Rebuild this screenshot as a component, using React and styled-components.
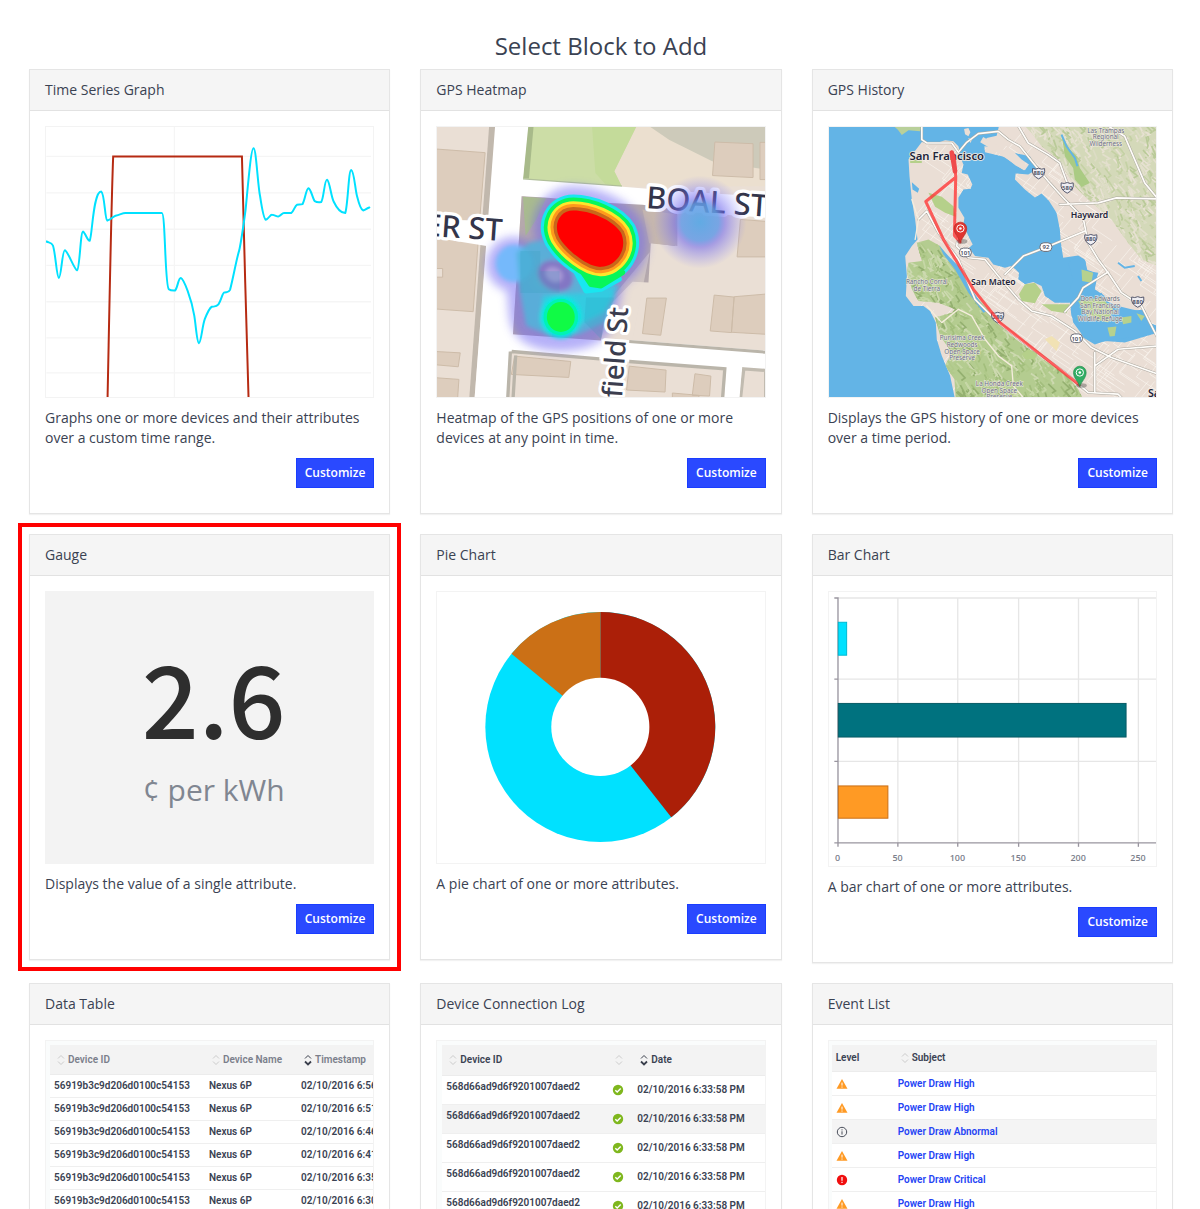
import React from "react";
import styled, { createGlobalStyle, css } from "styled-components";

const FONT = '"Open Sans", "Noto Sans", sans-serif';
const MAP_FONT = '"Noto Sans", "Open Sans", sans-serif';
const TABLE_FONT = 'Roboto, "Open Sans", sans-serif';
const INK = "#3a4252";

const GlobalStyle = createGlobalStyle`
  *, *::before, *::after { box-sizing: border-box; }
  body { margin: 0; background: #fff; color: ${INK}; font: 14px/20px ${FONT}; }
`;

const Page = styled.main`
  height: 100vh;
  overflow-y: auto;
  scrollbar-width: none;
  padding: 31px 27px 0 29px;
`;

const PageTitle = styled.h1`
  margin: 0 0 9px;
  font-size: 24px;
  line-height: 29px;
  font-weight: 400;
  text-align: center;
`;

const Grid = styled.div`
  display: grid;
  grid-template-columns: repeat(3, minmax(0, 1fr));
  gap: 20px 30px;
  align-items: start;
`;

const Card = styled.section`
  background: #fff;
  border: 1px solid #e5e5e5;
  box-shadow: 0 1px 1px rgba(0, 0, 0, 0.05);
  ${(p) => p.$highlighted && css`
    outline: 4px solid #ff0000;
    outline-offset: 7px;
  `}
`;

const CardTitle = styled.h2`
  margin: 0;
  padding: 10px 15px;
  background: #f5f5f5;
  border-bottom: 1px solid #e2e2e2;
  font-size: 14px;
  line-height: 20px;
  font-weight: 400;
`;

const CardBody = styled.div`
  display: flex;
  flex-direction: column;
  gap: 10px;
  padding: 15px 15px 25px;
`;

const Preview = styled.div`
  aspect-ratio: ${(p) => (p.$tall ? "330 / 276" : "330 / 273")};
  border: 1px solid #f3f3f3;
  background: #fff;
  overflow: hidden;
`;

const Drawing = styled.svg`
  display: block;
  width: 100%;
  height: 100%;
`;

const Description = styled.p`
  margin: 0;
`;

const CustomizeButton = styled.button`
  align-self: flex-end;
  height: 30px;
  padding: 0 8px;
  border: 1px solid #1a3dff;
  background: #2a49ff;
  color: #fff;
  font: 600 12px/18px ${FONT};
  cursor: pointer;
`;

const GaugeFace = styled(Preview)`
  display: flex;
  flex-direction: column;
  align-items: center;
  justify-content: center;
  gap: 4px;
  padding-left: 8px;
  background: #f3f3f3;
`;

const GaugeValue = styled.div`
  font: 500 100px/120px "Noto Sans CJK SC", "Roboto", sans-serif;
  color: #2e2e2e;
`;

const GaugeUnit = styled.div`
  font-size: 30px;
  line-height: 60px;
  color: #808691;
`;

const TablePreview = styled(Preview)`
  padding: 4px 0 0 ${(p) => p.$inset}px;
  background: #fafcfc;
`;

const Table = styled.table`
  width: ${(p) => p.$width};
  table-layout: fixed;
  border-collapse: collapse;
  background: #fff;
  font-family: ${TABLE_FONT};
  font-size: 10px;
  line-height: 12px;
  font-weight: 600;
  white-space: nowrap;
`;

const HeadCell = styled.th`
  width: ${(p) => (p.$width ? `${p.$width}px` : "auto")};
  height: ${(p) => p.$height}px;
  padding: 0 0 0 ${(p) => (p.$sortable ? 7 : 4)}px;
  background: #f3f3f3;
  border-bottom: 1px solid #ececec;
  color: ${(p) => (p.$muted ? "#7b7f8b" : INK)};
  font-weight: 600;
  text-align: left;
`;

const HeadLabel = styled.span`
  display: flex;
  align-items: center;
  gap: 3px;
`;

const Row = styled.tr`
  height: ${(p) => p.$height}px;
  background: ${(p) => (p.$shaded ? "#f4f4f4" : "#fff")};
`;

const Cell = styled.td`
  padding: ${(p) => (p.$raised ? "0 0 6px 4px" : "0 0 0 4px")};
  border-bottom: 1px solid #efefef;
  & > svg { display: block; }
`;

const EventLink = styled.a`
  color: #2443f5;
  text-decoration: none;
`;

function SortIcon({ active }) {
  return (
    <svg width="8" height="12" viewBox="0 0 8 12" fill="none" stroke={active ? "#3a3f4c" : "#cccccc"} aria-hidden="true">
      <path d="M1 4.5 4 1.5 7 4.5" />
      <path d="M1 7.5 4 10.5 7 7.5" strokeWidth={active ? 1.8 : 1} />
    </svg>
  );
}

function CheckIcon() {
  return (
    <svg width="12" height="12" viewBox="0 0 12 12" aria-hidden="true">
      <circle cx="6" cy="6" r="5.2" fill="#7fb71e" />
      <path d="M3.3 6.2 5.2 8 8.7 4.4" fill="none" stroke="#fff" strokeWidth="1.4" />
    </svg>
  );
}

function LevelIcon({ level }) {
  return (
    <svg width="12" height="12" viewBox="0 0 12 12" role="img" aria-label={level}>
      {level === "high" && (
        <>
          <path d="M6 1 11.5 10.8H.5Z" fill="#ff9a24" />
          <path d="M6 4.6V7.6M6 8.5V9.6" stroke="#fff" strokeWidth="1" />
        </>
      )}
      {level === "abnormal" && (
        <>
          <circle cx="6" cy="6" r="4.7" fill="none" stroke="#4a4f5b" />
          <path d="M6 5.3V8.6M6 3.3V4.4" stroke="#4a4f5b" strokeWidth="1" />
        </>
      )}
      {level === "critical" && (
        <>
          <circle cx="6" cy="6" r="5.2" fill="#f00f0f" />
          <path d="M6 3V6.7M6 7.7V9" stroke="#fff" strokeWidth="1.2" />
        </>
      )}
    </svg>
  );
}

function TimeSeries() {
  return (
    <Drawing viewBox="136 320 987 817" role="img" aria-label="Line graph">
      <g stroke="#f5f5f5" strokeWidth="4">
        {[409, 519, 629, 738, 848, 957, 1063].map((y) => <path key={y} d={`M136 ${y}H1117`} />)}
        <path d="M523 320V1137" />
      </g>
      <path d="M321 1140C326 900 332 560 338 409H727C732 560 740 960 747 1140" fill="none" stroke="#b62a12" strokeWidth="6" />
      <path
        d="M136 666C145 670 152 668 156 678C164 700 167 775 174 776C181 776 184 692 192 692C202 696 220 750 229 753C237 750 239 636 247 636C254 640 260 663 267 664C275 650 277 515 302 515C312 520 313 600 320 603C335 598 338 590 345 588C360 585 365 580 375 580H485C496 580 494 800 506 810C512 815 520 814 525 814C533 805 535 776 542 776C552 780 575 840 583 890C588 920 591 972 597 973C604 972 607 920 615 900C622 882 630 866 636 863C645 862 650 864 656 856C664 845 668 820 674 820C682 818 686 822 691 812C700 780 710 720 719 692C726 660 734 600 738 570C745 500 754 384 762 384C770 384 775 500 782 530C788 570 793 598 799 600C808 598 812 584 818 585C828 586 833 592 838 590C845 588 848 580 854 580H876C884 574 887 558 893 555C900 554 905 555 910 553C918 540 921 505 928 505C936 508 940 535 947 544C953 548 960 548 966 547C974 540 976 479 984 479C992 482 996 530 1004 545C1012 562 1022 580 1039 580C1047 560 1049 450 1057 450C1066 452 1069 510 1075 530C1080 550 1088 570 1093 572C1102 570 1104 565 1112 563"
        fill="none" stroke="#00e1ff" strokeWidth="6" strokeLinecap="round" strokeLinejoin="round"
      />
    </Drawing>
  );
}

const HOT_SPOT = "M462 303C510 303 580 330 605 370C628 420 590 472 545 473C505 475 440 420 420 385C400 345 420 303 462 303Z";
const WARM_BANDS = [
  ["#08f65a", 78], ["#ffe52b", 56], ["#ff9a1c", 38], ["#c8671b", 20], ["#ff0000", 0],
];

function Heatmap() {
  return (
    <Drawing viewBox="51 51 986 816" preserveAspectRatio="xMidYMid slice" role="img" aria-label="GPS heatmap">
      <defs>
        <filter id="heatBlur" x="-30%" y="-30%" width="160%" height="160%"><feGaussianBlur stdDeviation="14" /></filter>
        <filter id="heatSoft" x="-30%" y="-30%" width="160%" height="160%"><feGaussianBlur stdDeviation="7" /></filter>
        <radialGradient id="heatSpot">
          <stop offset="0" stopColor="#5aa8e4" stopOpacity=".95" />
          <stop offset=".4" stopColor="#649be6" stopOpacity=".85" />
          <stop offset=".55" stopColor="#7068ee" stopOpacity=".55" />
          <stop offset="1" stopColor="#8080ff" stopOpacity="0" />
        </radialGradient>
      </defs>
      <rect x="49" y="49" width="992" height="822" fill="#eadfd5" />
      <path d="M650 49H1041V230L600 232 585 185Z" fill="#ebdfcf" />
      <path d="M690 49H1041V180L880 155 750 90Z" fill="#cdcaba" />
      <path d="M325 49H652L585 185 608 232 310 210Z" fill="#ccdda6" />
      <path d="M518 49H652L585 185 608 232 560 226 528 190Z" fill="#c4db9a" />
      <path d="M324 49H342L328 207 310 206Z" fill="#a8ba8a" />
      <path d="M310 206 608 228V236L310 214Z" fill="#b1bf9b" />
      <g fill="#ddcdbd" stroke="#cdbba8" strokeWidth="3">
        <path d="M48 118 196 129 180 325 160 608 48 600Z" />
        <path d="M888 97 1003 102V204L881 198ZM1024 98H1041V210H1024Z" />
        <path d="M965 330 1041 336V443H955Z" />
        <path d="M683 567H742L725 679 670 674ZM886 558 946 564 938 671 874 666ZM946 563 1041 555V676L938 670Z" />
        <path d="M285 742 454 758 448 806 275 797ZM630 772 741 784 738 850 622 844ZM828 795 876 802 872 862 820 860ZM760 853 840 860V870H760ZM48 728 121 732 115 774 48 768ZM48 807 117 812 113 870H48Z" />
      </g>
      <path d="M48 478H68V504H48Z" fill="#eadfd5" stroke="#cdbba8" strokeWidth="3" />
      <path d="M208 49H228L164 871H148Z" fill="#c1b8ad" />
      <path d="M226 49H326L310 210 610 232 760 244 1041 262V325L690 300 306 260 280 676 640 694 1041 725V795L272 727 264 871H164Z" fill="#fff" />
      <path d="M50 330 230 335 200 410 50 386Z" fill="#fff" />
      <path d="M975 780 1041 785V871H965Z" fill="#eadfd5" stroke="#c1bbb0" strokeWidth="10" />
      <path d="M922 775H970L962 871H916Z" fill="#fff" />
      <path d="M276 728 540 750M272 728 264 871H280L288 740M630 758 918 780 911 871" fill="none" stroke="#bab5aa" strokeWidth="10" />
      <path d="M630 698 1041 730" stroke="#bab5aa" strokeWidth="9" />
      <path d="M306 260 375 264 560 280 670 286 775 300 768 410 695 400 688 520 640 518 560 600 545 695 280 676Z" fill="#b5a9ac" />
      <path d="M310 262 380 266 350 330 318 380Z" fill="#a9bb8f" />
      <path d="M670 300 775 315V410L690 402Z" fill="#c6b7ae" />
      <path d="M692 428 640 690H580L575 570Z" fill="#eadfd5" opacity=".5" />
      <g fontFamily={MAP_FONT} fontWeight="500" fontSize="92" fill="#33354a" stroke="#fff" strokeWidth="20" strokeLinejoin="round" paintOrder="stroke">
        <text transform="translate(680 296) rotate(4)">BOAL ST</text>
        <text transform="translate(246 395) rotate(4)" textAnchor="end">ER ST</text>
      </g>
      <g filter="url(#heatBlur)" fill="#6d63f2" stroke="#6d63f2" opacity=".5">
        <circle cx="282" cy="465" r="82" />
        <path d="M270 520 420 560 600 540 580 630C560 690 510 715 424 718C340 716 285 690 278 620Z" strokeWidth="20" />
        <path d={HOT_SPOT} strokeWidth="145" />
      </g>
      <circle cx="843" cy="338" r="140" fill="url(#heatSpot)" />
      <g filter="url(#heatSoft)">
        <circle cx="284" cy="463" r="56" fill="#74b9fb" />
        <path d="M330 400 380 390 560 520 590 560 555 640 480 675 390 680 320 650 300 540 290 430Z" fill="#50b4da" opacity=".85" />
        <path d="M470 500 600 530 555 610 460 660 360 640 370 560 500 550Z" fill="#22d7e5" opacity=".7" />
        <ellipse cx="408" cy="500" rx="56" ry="44" fill="#8376c4" transform="rotate(30 408 500)" />
        <ellipse cx="404" cy="496" rx="28" ry="22" fill="#a799d6" transform="rotate(30 404 496)" />
        <ellipse cx="424" cy="624" rx="62" ry="64" fill="#05e8e2" />
      </g>
      <path d="M302 425H362V486H302ZM302 486H420V552H302ZM500 565H585L545 690 495 640Z" fill="#2e9ab8" opacity=".2" />
      <ellipse cx="424" cy="624" rx="52" ry="55" fill="#00f3b4" />
      <ellipse cx="424" cy="624" rx="42" ry="45" fill="#10fb45" />
      <g fill="#19e6f0" stroke="#19e6f0" strokeLinejoin="round">
        <path d="M450 450 600 510 545 540 500 545Z" strokeWidth="16" />
        <path d={HOT_SPOT} strokeWidth="96" />
      </g>
      <path d="M470 460 610 490 545 530 515 526Z" fill="#08f65a" stroke="#08f65a" strokeWidth="16" strokeLinejoin="round" />
      {WARM_BANDS.map(([color, width]) => (
        <path key={color} d={HOT_SPOT} fill={color} stroke={color} strokeWidth={width} />
      ))}
      <text transform="translate(608 868) rotate(-86)" fontFamily={MAP_FONT} fontWeight="500" fontSize="83" fill="#3b3d4e" stroke="#fff" strokeWidth="18" strokeLinejoin="round" paintOrder="stroke">field St</text>
    </Drawing>
  );
}

const PENINSULA = "M290 150 330 97 365 103 400 92 425 95 440 110 445 140 455 165 450 190 468 195 482 225 476 238 455 240 440 265 440 295 458 325 455 345 470 380 483 405 472 415 490 440 530 445 545 465 580 475 600 470 622 490 620 510 640 525 665 518 690 530 700 560 730 580 775 580 780 620 800 650 815 685 850 706 880 695 940 700 1041 670V871H430L415 800 390 740 375 690 372 640 355 605 335 590 305 590 282 560 285 500 280 440 300 410 317 390 310 330 300 270 293 200Z";
const EAST_BAY = "M562 49 555 78 525 85 520 98 545 112 518 110 520 128 580 142 612 168 640 182 652 165 630 150 610 130 655 140 675 180 650 195 612 192 610 210 640 240 670 264 690 252 712 274 735 310 745 360 748 400 755 445 800 438 820 450 828 485 860 490 850 540 880 560 900 600 960 605 1000 600 1012 640 1041 650V49Z";
const WEST_HILLS = "M315 400 350 390 385 410 430 470 470 540 520 590 560 640 600 680 640 710 700 755 760 790 800 840 815 871H432L428 810 400 770 420 730 385 680 370 625 420 610 430 600 380 580 320 575 300 540 285 490 290 460 330 455Z";
const EAST_HILLS = "M640 49H1041V470L990 450 950 400 900 330 830 270 790 230 740 150 690 110 660 70Z";
const HIGHWAYS = "M330 49V90L345 100H420L440 128 465 98 500 72 560 65 590 90 625 110 665 160 710 215 760 270 815 325 830 400 860 450 890 490 930 550 990 590 1041 690M620 49 650 100 710 135 745 160 765 215 780 240M890 49 940 80 970 150 1000 220 1041 270M745 285 860 280 915 265 1041 268M580 495 635 440 700 415 820 365M760 608 800 565 815 535 890 488M440 370 435 410 470 445 520 450 560 500 620 570 660 605 720 620 790 665 840 715 900 745 1041 795M320 330 345 305 380 370 440 450 490 570 560 640 650 710 760 790 830 850 920 855 935 871M850 730V850M850 770 920 720 1041 710";

function scatter(seed, count, x, y, width, height) {
  let state = seed;
  const next = () => {
    state = (state * 16807) % 2147483647;
    return state / 2147483647;
  };
  return Array.from({ length: count }, () => ({
    x: Math.round(x + next() * width),
    y: Math.round(y + next() * height),
    dx: Math.round(6 + next() * 18),
    dy: Math.round(8 + next() * 20),
    tone: next(),
  }));
}

const ridges = (points, tones) =>
  points.map((p, i) => (
    <path key={i} d={`M${p.x} ${p.y}l${p.dx} ${p.dy}l${-Math.round(p.dx / 2)} ${Math.round(p.dy / 3)}`} stroke={tones[Math.floor(p.tone * tones.length)]} />
  ));

const WEST_RIDGES = scatter(7013, 900, 270, 380, 550, 490);
const EAST_RIDGES = scatter(2191, 620, 640, 40, 400, 430);
const STREETS = scatter(3571, 260, 300, 100, 740, 770);

function RouteShield({ x, y, label, interstate }) {
  return (
    <g transform={`translate(${x} ${y})`}>
      {interstate ? (
        <path d="M-18-13Q-9-9 0-14Q9-9 18-13Q22 8 0 18Q-22 8-18-13Z" fill="#eeeef3" stroke="#55586d" strokeWidth="3" />
      ) : (
        <rect x="-18" y="-13" width="36" height="26" rx="12" fill="#fff" stroke="#696c77" strokeWidth="3" />
      )}
      <text y="7" textAnchor="middle" fontSize="18" fontWeight="600" fill="#454a5c">{label}</text>
    </g>
  );
}

function Pin({ x, y, color, rim }) {
  return (
    <g transform={`translate(${x} ${y})`}>
      <ellipse cx="5" cy="-3" rx="16" ry="7" fill="#333" opacity=".35" />
      <path d="M0 0C-5-16-19-25-19-42A19 19 0 0 1 19-42C19-25 5-16 0 0Z" fill={color} stroke={rim} strokeWidth="2" />
      <circle cy="-42" r="11" fill="none" stroke="#fff" strokeWidth="3" />
      <circle cy="-42" r="4" fill="#fff" />
    </g>
  );
}

function MapLabel({ x, y, lines }) {
  return lines.map((line, i) => (
    <text key={line} x={x} y={y + i * 20} textAnchor="middle">{line}</text>
  ));
}

function HistoryMap() {
  return (
    <Drawing viewBox="51 51 984 815" preserveAspectRatio="xMidYMid slice" role="img" aria-label="GPS history map">
      <defs>
        <clipPath id="westHills"><path d={WEST_HILLS} /></clipPath>
        <clipPath id="eastHills"><path d={EAST_HILLS} /></clipPath>
        <clipPath id="land"><path d={PENINSULA} /><path d={EAST_BAY} /></clipPath>
      </defs>
      <rect x="49" y="49" width="992" height="822" fill="#63b4e6" />
      <path d="M245 49H330L325 65 290 62 270 76 258 60Z" fill="#b9d09a" />
      <g fill="#eaded5">
        <path d={PENINSULA} />
        <path d={EAST_BAY} />
        <path d="M457 58 470 55 476 68 470 80 460 74ZM470 85 482 88 476 100Z" />
      </g>
      <g clipPath="url(#land)">
        <g stroke="#fbf6f0" strokeWidth="2" fill="none">
          {STREETS.map((p, i) => (
            <path key={i} d={`M${p.x} ${p.y}l60 40M${p.x} ${p.y}l${p.dy + 20} ${-p.dy - 28}`} />
          ))}
        </g>
        <path d={WEST_HILLS} fill="#b4cc90" />
        <path d={EAST_HILLS} fill="#d4d9b9" />
        <g clipPath="url(#westHills)" fill="none" strokeWidth="5">{ridges(WEST_RIDGES, ["#a2be7c", "#c6d7a6", "#94b070", "#b0c98a", "#cdd9b0"])}</g>
        <g clipPath="url(#eastHills)" fill="none" strokeWidth="5">{ridges(EAST_RIDGES, ["#e3dfcd", "#c4d1a4", "#dcdcc4", "#b9ca98", "#e7e1d2"])}</g>
        <path d="M295 150H330V160H295ZM350 250 390 262 425 290 432 322 400 310 370 292ZM640 525 670 520 690 545 670 582 630 575 622 555ZM690 585 775 585 765 612 720 605ZM400 98 415 96 412 104ZM650 720 680 730 670 750 640 750 630 735Z" fill="#b5d08a" />
        <path d="M700 690 720 680 745 700 735 725Z" fill="#f1e2b4" />
        <path d="M300 218 322 238 318 250 302 240ZM382 408 410 440 440 470 480 540 524 606 515 610 470 550 430 480 395 435Z" fill="#63b4e6" />
        <path d="M750 75 775 120 795 140 805 175 835 220 810 232 790 210 785 175 760 140 755 105Z" fill="#aacb83" />
        <path d="M750 75 765 110 790 145 798 170M920 460 940 475 970 470M980 500 990 515" fill="none" stroke="#63b4e6" strokeWidth="6" />
      </g>
      <path d="M770 460 800 440 822 455 825 480 850 490 840 520 815 530 835 560 870 550 885 575 920 590 960 600 985 605 1000 630 980 640 1030 655 1035 670 980 680 920 690 860 700 815 680 785 640 778 600 800 575 775 540 785 510Z" fill="#63b4e6" />
      <path d="M810 480 845 490 840 520 812 515ZM800 575 870 565 905 600 890 640 830 625ZM888 655 915 652 910 680 895 682ZM930 625 960 620 960 640 935 645ZM975 612 1000 620 990 635Z" fill="#b6d18e" />
      <path d="M510 90Q570 125 642 175" fill="none" stroke="#eaded5" strokeWidth="18" />
      <g fill="none" strokeLinejoin="round" strokeLinecap="round">
        <path d={HIGHWAYS} stroke="#aaa79e" strokeWidth="8" />
        <path d={HIGHWAYS} stroke="#fffdfa" strokeWidth="5" />
        <path d="M345 590 390 640 440 600 480 620 520 690 560 740 600 770 605 830 640 871M310 390 320 330 300 270" stroke="#f5eddd" strokeWidth="4" />
      </g>
      <g fontFamily={MAP_FONT}>
        <g fontSize="19" fill="#676b80" stroke="#f0ece2" strokeWidth="3" paintOrder="stroke">
          <MapLabel x={883} y={69} lines={["Las Trampas", "Regional", "Wilderness"]} />
          <MapLabel x={345} y={524} lines={["Rancho Corral", "de Tierra"]} />
          <MapLabel x={451} y={693} lines={["Purisima Creek", "Redwoods", "Open Space", "Preserve"]} />
          <MapLabel x={563} y={831} lines={["La Honda Creek", "Open Space", "Preserve"]} />
          <MapLabel x={866} y={575} lines={["Don Edwards", "San Francisco", "Bay National", "Wildlife Refuge"]} />
        </g>
        <RouteShield x={681} y={190} label="880" interstate />
        <RouteShield x={767} y={233} label="580" interstate />
        <RouteShield x={838} y={389} label="880" interstate />
        <RouteShield x={979} y={576} label="880" interstate />
        <RouteShield x={558} y={623} label="280" interstate />
        <RouteShield x={703} y={413} label="92" />
        <RouteShield x={461} y={429} label="101" />
        <RouteShield x={795} y={687} label="101" />
        <g fill="#22243a" stroke="#f4ece4" strokeWidth="5" paintOrder="stroke" fontWeight="600">
          <text x="405" y="152" textAnchor="middle" fontSize="34">San Francisco</text>
          <text x="834" y="327" textAnchor="middle" fontSize="26">Hayward</text>
          <text x="545" y="526" textAnchor="middle" fontSize="26">San Mateo</text>
          <text x="1010" y="864" fontSize="32">Sa</text>
        </g>
      </g>
      <path d="M420 128 428 140 432 203 342 276 395 390 485 540 565 640 804 828M432 200 428 378 445 398" fill="none" stroke="#f33" strokeOpacity=".78" strokeWidth="9" strokeLinejoin="round" strokeLinecap="round" />
      <path d="M420 129 430 185" stroke="#ef4b4b" strokeWidth="14" strokeLinecap="round" />
      <Pin x={446} y={399} color="#df3530" rim="#b82520" />
      <Pin x={805} y={832} color="#31ad63" rim="#238b4b" />
    </Drawing>
  );
}

function PieChart() {
  return (
    <Drawing viewBox="51 66 986 816" role="img" aria-label="Pie chart">
      <circle cx="543" cy="473" r="347" fill="#00e1ff" />
      <path d="M543 473V126A347 347 0 0 1 757 746Z" fill="#ab1f08" />
      <path d="M543 473 275 252A347 347 0 0 1 543 126Z" fill="#cb7016" />
      <circle cx="543" cy="473" r="148" fill="#fff" />
    </Drawing>
  );
}

const TICKS = [[0, 113], [50, 293], [100, 473], [150, 656], [200, 836], [250, 1016]];

function BarChart() {
  return (
    <Drawing viewBox="86 66 984 822" role="img" aria-label="Bar chart">
      <g stroke="#e6e6e6" strokeWidth="4">
        {[84, 328, 575].map((y) => <path key={y} d={`M113 ${y}H1070`} />)}
        {TICKS.slice(1).map(([value, x]) => <path key={value} d={`M${x} 84V820`} />)}
      </g>
      <path d="M102 84H113V820M102 328H113M102 575H113M102 820H1070" fill="none" stroke="#99959f" strokeWidth="4" />
      <rect x="114" y="157" width="25" height="99" fill="#00e1ff" stroke="#00b9d2" strokeWidth="3" />
      <rect x="114" y="401" width="865" height="101" fill="#00727f" stroke="#075b65" strokeWidth="3" />
      <rect x="114" y="649" width="149" height="97" fill="#ff9a24" stroke="#ca6f16" strokeWidth="3" />
      {TICKS.map(([value, x]) => (
        <g key={value}>
          <path d={`M${x} 820V832`} stroke="#99959f" strokeWidth="4" />
          <text x={x - 1} y="876" textAnchor="middle" fontFamily={FONT} fontSize="27" fontWeight="600" fill="#7c808c">{value}</text>
        </g>
      ))}
    </Drawing>
  );
}

function DataTable() {
  const minutes = ["6:56", "6:51", "6:46", "6:41", "6:35", "6:30"];
  return (
    <TablePreview $inset={4}>
      <Table $width="360px">
        <thead>
          <tr>
            <HeadCell $width={155} $height={30} $sortable $muted><HeadLabel><SortIcon />Device ID</HeadLabel></HeadCell>
            <HeadCell $width={92} $sortable $muted><HeadLabel><SortIcon />Device Name</HeadLabel></HeadCell>
            <HeadCell $sortable $muted><HeadLabel><SortIcon active />Timestamp</HeadLabel></HeadCell>
          </tr>
        </thead>
        <tbody>
          {minutes.map((time) => (
            <Row key={time} $height={23}>
              <Cell>56919b3c9d206d0100c54153</Cell>
              <Cell>Nexus 6P</Cell>
              <Cell>02/10/2016 {time}</Cell>
            </Row>
          ))}
        </tbody>
      </Table>
    </TablePreview>
  );
}

function ConnectionLog() {
  return (
    <TablePreview $inset={5}>
      <Table $width="100%">
        <thead>
          <tr>
            <HeadCell $width={166} $height={31} $sortable><HeadLabel><SortIcon />Device ID</HeadLabel></HeadCell>
            <HeadCell $width={25} $sortable><HeadLabel><SortIcon /></HeadLabel></HeadCell>
            <HeadCell $sortable><HeadLabel><SortIcon active />Date</HeadLabel></HeadCell>
          </tr>
        </thead>
        <tbody>
          {[0, 1, 2, 3, 4].map((n) => (
            <Row key={n} $height={29} $shaded={n === 1}>
              <Cell $raised>568d66ad9d6f9201007daed2</Cell>
              <Cell><CheckIcon /></Cell>
              <Cell>02/10/2016 6:33:58 PM</Cell>
            </Row>
          ))}
        </tbody>
      </Table>
    </TablePreview>
  );
}

function EventList() {
  const events = [["high", "High"], ["high", "High"], ["abnormal", "Abnormal"], ["high", "High"], ["critical", "Critical"], ["high", "High"]];
  return (
    <TablePreview $inset={3}>
      <Table $width="100%">
        <thead>
          <tr>
            <HeadCell $width={62} $height={27}>Level</HeadCell>
            <HeadCell $sortable><HeadLabel><SortIcon />Subject</HeadLabel></HeadCell>
          </tr>
        </thead>
        <tbody>
          {events.map(([level, name], n) => (
            <Row key={n} $height={24} $shaded={level === "abnormal"}>
              <Cell><LevelIcon level={level} /></Cell>
              <Cell><EventLink href="#event">Power Draw {name}</EventLink></Cell>
            </Row>
          ))}
        </tbody>
      </Table>
    </TablePreview>
  );
}

function Block({ title, description, highlighted, children }) {
  return (
    <Card $highlighted={highlighted}>
      <CardTitle>{title}</CardTitle>
      <CardBody>
        {children}
        {description && (
          <>
            <Description>{description}</Description>
            <CustomizeButton type="button">Customize</CustomizeButton>
          </>
        )}
      </CardBody>
    </Card>
  );
}

export default function App() {
  return (
    <>
      <GlobalStyle />
      <Page>
        <PageTitle>Select Block to Add</PageTitle>
        <Grid>
          <Block title="Time Series Graph" description="Graphs one or more devices and their attributes over a custom time range.">
            <Preview><TimeSeries /></Preview>
          </Block>
          <Block title="GPS Heatmap" description="Heatmap of the GPS positions of one or more devices at any point in time.">
            <Preview><Heatmap /></Preview>
          </Block>
          <Block title="GPS History" description="Displays the GPS history of one or more devices over a time period.">
            <Preview><HistoryMap /></Preview>
          </Block>
          <Block title="Gauge" description="Displays the value of a single attribute." highlighted>
            <GaugeFace>
              <GaugeValue>2.6</GaugeValue>
              <GaugeUnit>¢ per kWh</GaugeUnit>
            </GaugeFace>
          </Block>
          <Block title="Pie Chart" description="A pie chart of one or more attributes.">
            <Preview><PieChart /></Preview>
          </Block>
          <Block title="Bar Chart" description="A bar chart of one or more attributes.">
            <Preview $tall><BarChart /></Preview>
          </Block>
          <Block title="Data Table"><DataTable /></Block>
          <Block title="Device Connection Log"><ConnectionLog /></Block>
          <Block title="Event List"><EventList /></Block>
        </Grid>
      </Page>
    </>
  );
}
